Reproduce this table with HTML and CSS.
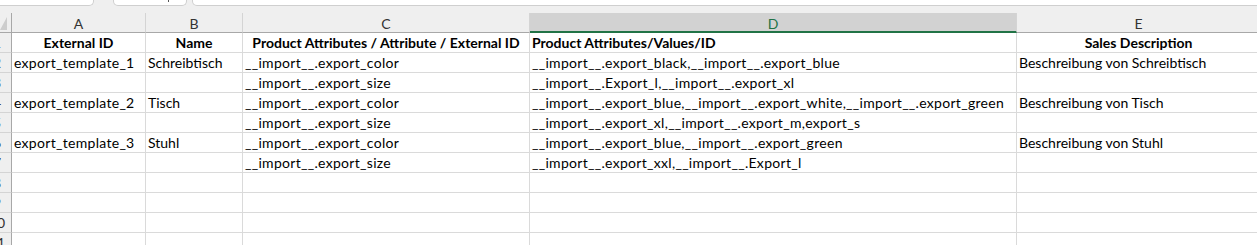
FILE: index.html
```html
<!DOCTYPE html>
<html lang="en">
<head>
    <meta charset="UTF-8">
    <meta name="viewport" content="width=device-width, initial-scale=1.0">
    <title>Product Templates Export</title>
    <link rel="stylesheet" href="styles.css">
</head>
<body>
    <div class="tabs">
        <div class="tab tab-first"></div>
        <div class="tab tab-second"><span class="tab-mark"></span></div>
        <div class="tab tab-bar"></div>
    </div>

    <div class="sheet">
        <div class="row col-heads">
            <div class="cell corner">
                <svg width="8" height="15" viewBox="0 0 8 15"><polygon points="8,0 8,15 0,15" fill="#cdcdcd"/></svg>
            </div>
            <div class="cell head">A</div>
            <div class="cell head">B</div>
            <div class="cell head">C</div>
            <div class="cell head selected">D</div>
            <div class="cell head">E</div>
        </div>

        <div class="row">
            <div class="cell num"><span>1</span></div>
            <div class="cell bold center">External ID</div>
            <div class="cell bold center">Name</div>
            <div class="cell bold center">Product Attributes / Attribute / External ID</div>
            <div class="cell bold">Product Attributes/Values/ID</div>
            <div class="cell bold center">Sales Description</div>
        </div>
        <div class="row">
            <div class="cell num"><span>2</span></div>
            <div class="cell id">export_template_1</div>
            <div class="cell">Schreibtisch</div>
            <div class="cell id">__import__.export_color</div>
            <div class="cell id">__import__.export_black,__import__.export_blue</div>
            <div class="cell">Beschreibung von Schreibtisch</div>
        </div>
        <div class="row">
            <div class="cell num"><span>3</span></div>
            <div class="cell"></div>
            <div class="cell"></div>
            <div class="cell id">__import__.export_size</div>
            <div class="cell id">__import__.Export_l,__import__.export_xl</div>
            <div class="cell"></div>
        </div>
        <div class="row">
            <div class="cell num"><span>4</span></div>
            <div class="cell id">export_template_2</div>
            <div class="cell">Tisch</div>
            <div class="cell id">__import__.export_color</div>
            <div class="cell id">__import__.export_blue,__import__.export_white,__import__.export_green</div>
            <div class="cell">Beschreibung von Tisch</div>
        </div>
        <div class="row">
            <div class="cell num"><span>5</span></div>
            <div class="cell"></div>
            <div class="cell"></div>
            <div class="cell id">__import__.export_size</div>
            <div class="cell id">__import__.export_xl,__import__.export_m,export_s</div>
            <div class="cell"></div>
        </div>
        <div class="row">
            <div class="cell num"><span>6</span></div>
            <div class="cell id">export_template_3</div>
            <div class="cell">Stuhl</div>
            <div class="cell id">__import__.export_color</div>
            <div class="cell id">__import__.export_blue,__import__.export_green</div>
            <div class="cell">Beschreibung von Stuhl</div>
        </div>
        <div class="row">
            <div class="cell num"><span>7</span></div>
            <div class="cell"></div>
            <div class="cell"></div>
            <div class="cell id">__import__.export_size</div>
            <div class="cell id">__import__.export_xxl,__import__.Export_l</div>
            <div class="cell"></div>
        </div>
        <div class="row">
            <div class="cell num"><span>8</span></div>
            <div class="cell"></div><div class="cell"></div><div class="cell"></div><div class="cell"></div><div class="cell"></div>
        </div>
        <div class="row">
            <div class="cell num"><span>9</span></div>
            <div class="cell"></div><div class="cell"></div><div class="cell"></div><div class="cell"></div><div class="cell"></div>
        </div>
        <div class="row">
            <div class="cell num"><span>10</span></div>
            <div class="cell"></div><div class="cell"></div><div class="cell"></div><div class="cell"></div><div class="cell"></div>
        </div>
        <div class="row">
            <div class="cell num"><span>11</span></div>
            <div class="cell"></div><div class="cell"></div><div class="cell"></div><div class="cell"></div><div class="cell"></div>
        </div>
    </div>
</body>
</html>
```

FILE: styles.css
```css
body {
    margin: 0;
    overflow: hidden;
    background: #efefef;
    font-family: Lato, "Noto Sans", sans-serif;
    font-size: 14px;
    color: #000;
}

/* Strip of toolbar boxes above the grid */
.tabs {
    display: flex;
    height: 13px;
    align-items: flex-start;
}
.tab {
    height: 6px;
    box-sizing: border-box;
    background: #fff;
    border: 1px solid #cfcfcf;
    border-top: none;
    border-radius: 0 0 5px 5px;
}
.tab-first {
    width: 96px;
    margin-left: -2px;
    border-left: none;
    border-radius: 0 0 5px 0;
}
.tab-second {
    width: 74px;
    margin-left: 19px;
    position: relative;
}
.tab-mark {
    position: absolute;
    left: 54px;
    top: 0;
    width: 1px;
    height: 2px;
    background: #555;
}
.tab-bar {
    flex: 1;
    margin-left: 5px;
    margin-right: -4px;
}

/* Sheet grid */
.sheet {
    background: #fff;
}
.row {
    display: grid;
    grid-template-columns: 12px 134px 97px 287px 487px 244px;
}
.cell {
    height: 20px;
    box-sizing: border-box;
    border-right: 1px solid #dadada;
    border-bottom: 1px solid #dadada;
    padding: 1px 2px 0;
    line-height: 18px;
    white-space: nowrap;
    overflow: hidden;
}
.bold {
    font-weight: 700;
}
.center {
    text-align: center;
}
.id {
    letter-spacing: 0.3px;
}

/* Column letters */
.col-heads .cell {
    background: #efefef;
    border-right-color: #d4d4d4;
    border-bottom-color: #a8a8a8;
    padding-top: 2px;
    text-align: center;
    color: #333;
}
.col-heads .corner {
    border-right-color: #a8a8a8;
    padding: 0;
    display: flex;
    align-items: flex-end;
    justify-content: flex-end;
}
.corner svg {
    display: block;
    margin: 0 4px 1px 0;
}
.col-heads .selected {
    background: #d2d2d2;
    color: #217346;
    border-bottom: 2px solid #217346;
}

/* Row numbers, mostly scrolled out of view */
.num {
    background: #efefef;
    border-right-color: #a8a8a8;
    border-bottom-color: #d4d4d4;
    padding: 1px 0 0;
    display: flex;
    justify-content: flex-end;
    color: #333;
}
.num span {
    flex: none;
    width: 28px;
    text-align: center;
}
```
